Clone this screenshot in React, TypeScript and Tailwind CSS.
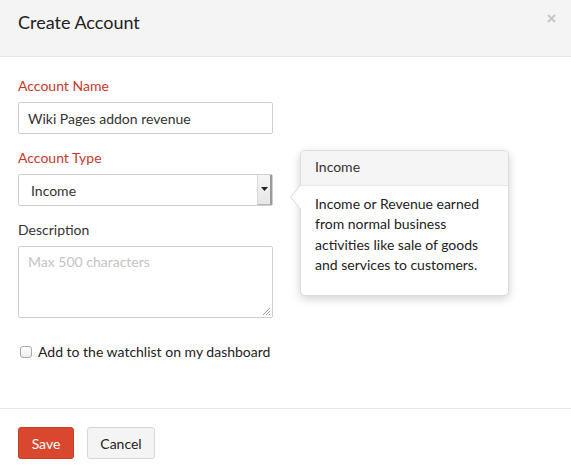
import React from "react";

export default function App() {
  return (
    <div className="relative w-[571px] h-[471px] bg-white text-[#333] overflow-hidden" style={{ fontFamily: "Lato, 'Open Sans', sans-serif" }}>
      {/* Header */}
      <div className="h-[57px] bg-[#f4f4f4] border-b border-[#e6e6e6] pl-[18px] pr-[15px] pt-[10px] flex justify-between">
        <div className="text-[18px] leading-[24px] text-[#222]">Create Account</div>
        <svg className="mt-[4px]" width="9" height="9" viewBox="0 0 9 9">
          <path d="M1 1L8 8M8 1L1 8" stroke="#c6c6c6" strokeWidth="2" />
        </svg>
      </div>

      {/* Body */}
      <div className="px-[18px] pt-[19px] h-[351px]">
        <div className="text-[14px] leading-[20px] text-[#c5392c]">Account Name</div>
        <div className="mt-[6px] w-[255px] h-[32px] border border-[#cfcfcf] rounded-[2px] flex items-center px-[9px] text-[14px]">Wiki Pages addon revenue</div>

        <div className="mt-[14px] text-[14px] leading-[20px] text-[#c5392c]">Account Type</div>
        <div className="mt-[6px] w-[255px] h-[32px] border border-[#cfcfcf] rounded-[2px] flex items-center text-[14px]">
          <div className="flex-1 pl-[12px]">Income</div>
          <div className="w-[15px] h-[30px] bg-gradient-to-b from-[#f6f6f6] to-[#e6e6e6] border-l border-[#d8d8d8] border-r-[2px] border-r-[#9a9a9a] border-b border-b-[#b5b5b5] flex items-center justify-center">
            <svg width="7" height="5" viewBox="0 0 7 5"><path d="M0 0h7L3.5 4z" fill="#222" /></svg>
          </div>
        </div>

        <div className="mt-[14px] text-[14px] leading-[20px]">Description</div>
        <div className="mt-[6px] w-[255px] h-[72px] border border-[#cfcfcf] rounded-[2px] px-[9px] pt-[5px] text-[14px] leading-[20px] text-[#c4c4c4] relative">
          Max 500 characters
          <svg className="absolute right-[1px] bottom-[1px]" width="9" height="9" viewBox="0 0 9 9">
            <path d="M8 1L1 8M8 4L4 8M8 7L7 8" stroke="#999" strokeWidth="1" />
          </svg>
        </div>

        <div className="mt-[24px] flex items-center">
          <div className="ml-[2px] w-[12px] h-[12px] border border-[#aaa] rounded-[3px] bg-gradient-to-b from-white to-[#ececec]" />
          <div className="ml-[6px] text-[14px] leading-[20px] text-[#222]">Add to the watchlist on my dashboard</div>
        </div>
      </div>

      {/* Footer */}
      <div className="border-t border-[#e8e8e8] px-[18px] pt-[18px] flex gap-[13px]">
        <button className="w-[56px] h-[32px] bg-[#d9472e] rounded-[3px] text-white text-[14px] border border-[#c83e27]">Save</button>
        <button className="w-[68px] h-[32px] bg-[#f4f4f4] rounded-[3px] text-[#222] text-[14px] border border-[#d6d6d6]">Cancel</button>
      </div>

      {/* Popover */}
      <div className="absolute left-[300px] top-[150px] w-[209px] bg-white border border-[#dcdcdc] rounded-[5px] shadow-[0_3px_10px_rgba(0,0,0,0.18)]">
        <div className="h-[35px] bg-[#f5f5f5] border-b border-[#e6e6e6] rounded-t-[5px] px-[14px] pt-[6px] text-[14px] leading-[20px] text-[#333]">Income</div>
        <div className="px-[14px] pt-[8px] pb-[20px] text-[14px] leading-[20.3px] text-[#222]">
          Income or Revenue earned from normal business activities like sale of goods and services to customers.
        </div>
        <div className="absolute left-[-11px] top-[33px] w-0 h-0 border-y-[13px] border-y-transparent border-r-[11px] border-r-[#d4d4d4]" />
        <div className="absolute left-[-10px] top-[34px] w-0 h-0 border-y-[12px] border-y-transparent border-r-[10px] border-r-white" />
      </div>
    </div>
  );
}
